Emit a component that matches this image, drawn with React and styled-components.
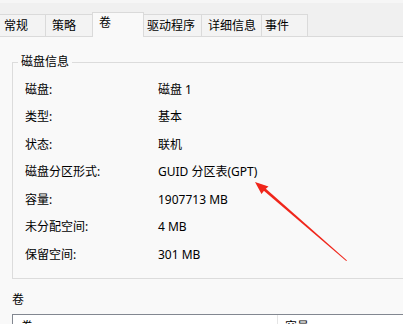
import React from "react";
import styled, { createGlobalStyle } from "styled-components";

const Global = createGlobalStyle`
  html, body { margin: 0; padding: 0; }
  body {
    width: 403px; height: 324px; overflow: hidden;
    background: #f9f9f9;
    font-family: "Noto Sans", "Noto Sans CJK SC", sans-serif;
    font-size: 12px; color: #000;
  }
`;

const Page = styled.div`
  position: relative;
  width: 403px;
  height: 324px;
  overflow: hidden;
  background: #f9f9f9;
`;

const TopBand = styled.div`
  height: 3px;
  background: #f6f6f6;
`;

const TabStrip = styled.div`
  display: flex;
  align-items: flex-end;
  height: 34px;
  box-sizing: border-box;
  background: #f0f0f0;
  border-bottom: 1px solid #dadada;
`;

const Tab = styled.div`
  box-sizing: border-box;
  width: ${(p) => p.$w}px;
  height: ${(p) => (p.$active ? 25 : 22)}px;
  padding-left: ${(p) => p.$pad}px;
  padding-top: ${(p) => (p.$active ? 0 : 1)}px;
  line-height: 20px;
  white-space: nowrap;
  background: ${(p) => (p.$active ? "#f9f9f9" : "#f3f3f3")};
  border-top: 1px solid #dadada;
  border-right: 1px solid #dadada;
  border-left: ${(p) => (p.$active ? "1px solid #dadada" : "none")};
  margin-left: ${(p) => (p.$active ? -1 : 0)}px;
  margin-bottom: ${(p) => (p.$active ? -1 : 0)}px;
  position: relative;
  z-index: ${(p) => (p.$active ? 1 : 0)};
`;

const Content = styled.div`
  padding-left: 12px;
`;

const Group = styled.fieldset`
  margin: 17px 0 0 0;
  width: 430px;
  box-sizing: border-box;
  border: 1px solid #dcdcdc;
  padding: 6px 0 9px 12px;
`;

const Legend = styled.legend`
  margin-left: -7px;
  padding: 0 3px;
  line-height: 16px;
`;

const Row = styled.div`
  display: grid;
  grid-template-columns: 133px 1fr;
  height: 27.5px;
  align-items: center;
  line-height: 16px;
  white-space: nowrap;
`;

const SectionLabel = styled.div`
  margin-top: 13px;
  line-height: 16px;
`;

const Table = styled.div`
  margin-top: 6px;
  width: 430px;
  border-top: 1px solid #828790;
  border-left: 1px solid #828790;
  display: flex;
  background: #ffffff;
  height: 20px;
`;

const HeadCell = styled.div`
  box-sizing: border-box;
  width: ${(p) => p.$w}px;
  padding: 4px 0 0 ${(p) => p.$pad}px;
  line-height: 16px;
  border-right: 1px solid #e5e5e5;
`;

const Arrow = styled.svg`
  position: absolute;
  left: 0;
  top: 0;
  pointer-events: none;
`;

const tabs = [
  { label: "常规", w: 46, pad: 4 },
  { label: "策略", w: 47, pad: 6 },
  { label: "卷", w: 52, pad: 6, active: true },
  { label: "驱动程序", w: 58, pad: 3 },
  { label: "详细信息", w: 60, pad: 6 },
  { label: "事件", w: 46, pad: 3 },
];

const rows = [
  ["磁盘:", "磁盘 1"],
  ["类型:", "基本"],
  ["状态:", "联机"],
  ["磁盘分区形式:", "GUID 分区表(GPT)"],
  ["容量:", "1907713 MB"],
  ["未分配空间:", "4 MB"],
  ["保留空间:", "301 MB"],
];

export default function App() {
  return (
    <Page>
      <Global />
      <TopBand />
      <TabStrip>
        {tabs.map((t) => (
          <Tab key={t.label} $w={t.w} $pad={t.pad} $active={t.active}>
            {t.label}
          </Tab>
        ))}
      </TabStrip>
      <Content>
        <Group>
          <Legend>磁盘信息</Legend>
          {rows.map(([k, v]) => (
            <Row key={k}>
              <span>{k}</span>
              <span>{v}</span>
            </Row>
          ))}
        </Group>
        <SectionLabel>卷</SectionLabel>
        <Table>
          <HeadCell $w={265} $pad={8}>卷</HeadCell>
          <HeadCell $w={140} $pad={7}>容量</HeadCell>
        </Table>
      </Content>
      <Arrow width="403" height="324" viewBox="0 0 403 324">
        <polygon points="347,260.5 346.2,261 261.5,188.8 263.3,186.6" fill="#f0261b" />
        <polygon points="255,182 268.5,186.5 265,189.5 261.5,194" fill="#f0261b" />
      </Arrow>
    </Page>
  );
}
